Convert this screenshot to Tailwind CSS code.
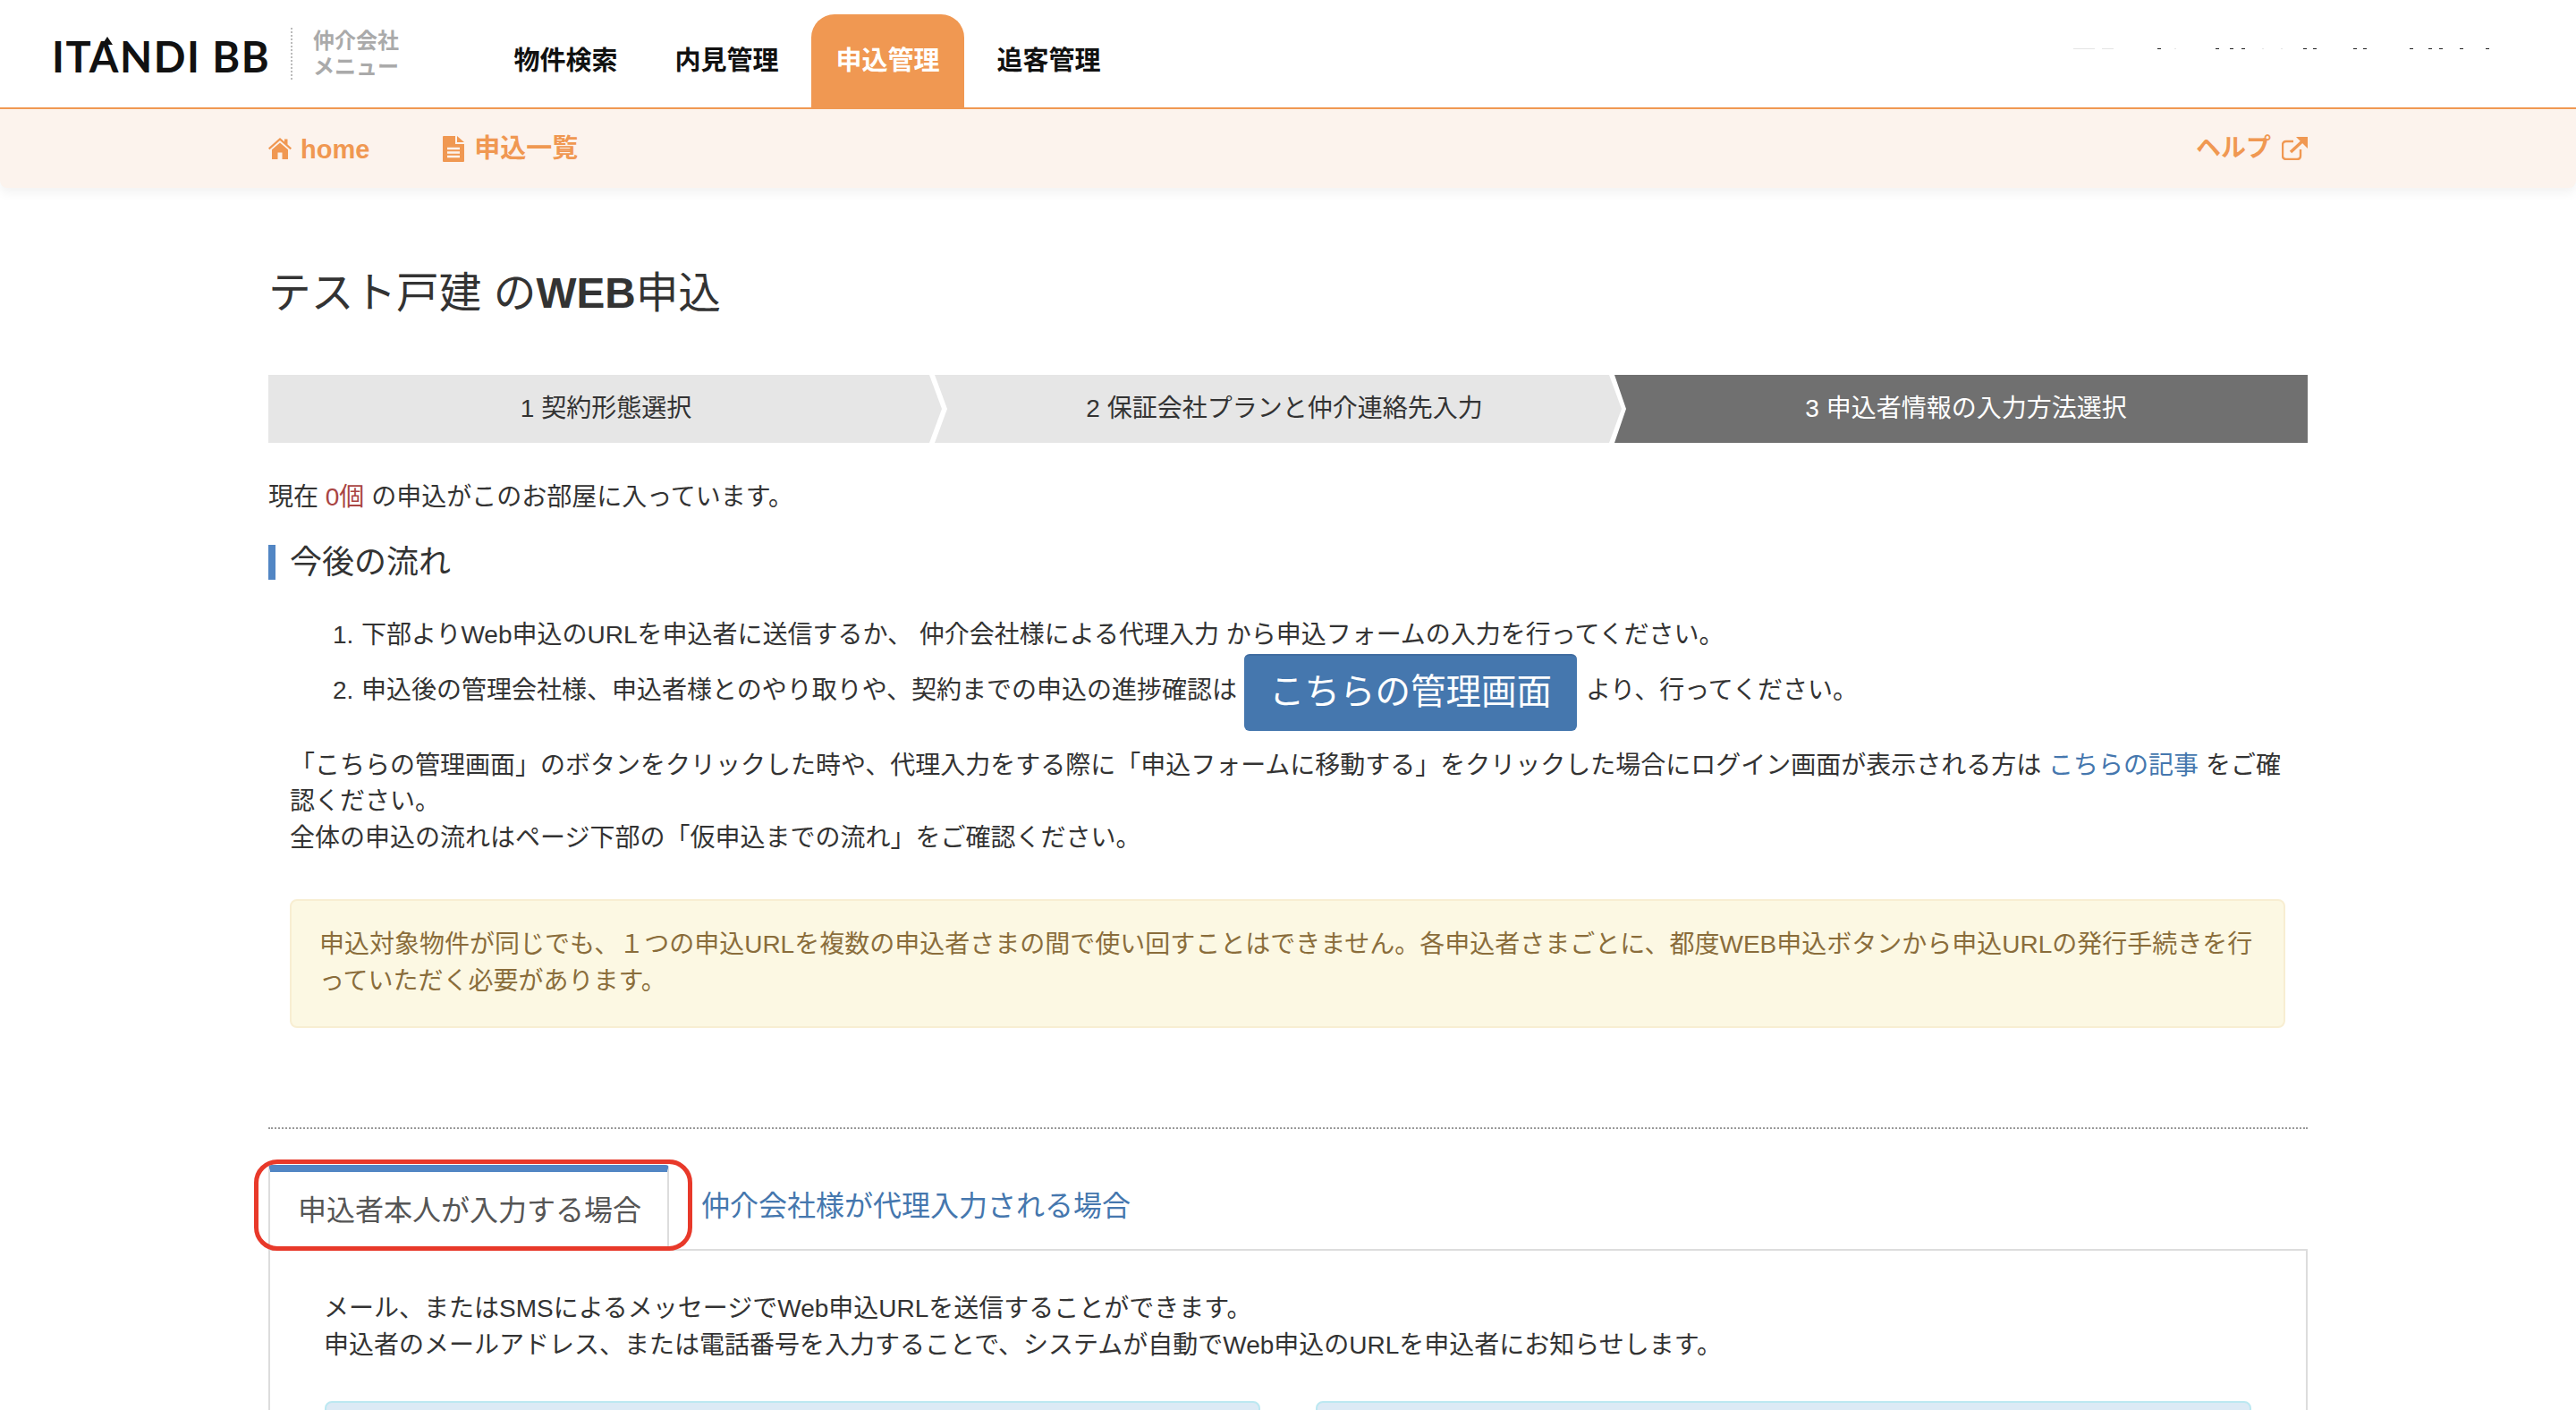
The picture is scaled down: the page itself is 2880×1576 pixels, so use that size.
<!DOCTYPE html>
<html lang="ja">
<head>
<meta charset="UTF-8">
<title>テスト戸建 のWEB申込</title>
<script src="https://cdn.jsdelivr.net/npm/@tailwindcss/browser@4"></script>
</head>
<body class="bg-white text-[#333] text-[28px] leading-[40.5px] font-['Liberation_Sans','Noto_Sans_CJK_JP',sans-serif]">
<div class="h-[1576px] overflow-hidden">

  <!-- header -->
  <header class="relative h-[122px] border-b-2 border-[#f09852] flex">
    <div class="relative w-[325px] pl-[58px] pt-[35px] shrink-0">
      <span class="font-['Lato',sans-serif] text-[47px] leading-[56px] font-bold text-[#111] tracking-[1.5px] whitespace-nowrap">ITANDI BB</span>
      <span class="absolute left-[114px] top-[41px] w-[12px] h-[9px] bg-[#111] [clip-path:polygon(50%_0,100%_100%,0_100%)]"></span>
    </div>
    <div class="mt-[31px] h-[58px] border-l-2 border-dotted border-[#bbb] pl-[23px] text-[24px] leading-[29px] font-bold text-[#aaa] whitespace-nowrap">
      <div>仲介会社</div>
      <div>メニュー</div>
    </div>
    <nav class="ml-[101px] mt-[16px] flex gap-[9px] text-[29px] font-bold text-[#111]">
      <a class="h-[104px] px-[27.5px] pt-[32px] whitespace-nowrap">物件検索</a>
      <a class="h-[104px] px-[27.5px] pt-[32px] whitespace-nowrap">内見管理</a>
      <a class="h-[104px] px-[27.5px] pt-[32px] whitespace-nowrap bg-[#f09852] text-white rounded-t-[26px]">申込管理</a>
      <a class="h-[104px] px-[27.5px] pt-[32px] whitespace-nowrap">追客管理</a>
    </nav>
    <!-- cropped remains of the text row at the top right -->
    <svg class="absolute left-[2300px] top-[53px] w-[500px] h-[3px]" viewBox="0 0 500 3">
      <path fill="#e4e4e4" d="M18 1h24v1h-24z M50 1h13v1h-13z M131 1h2v1h-2z M229 1h2v1h-2z M250 1h2v1h-2z"/>
      <path fill="#222" d="M112 1h4v1h-4z M177 1h4v1h-4z M193 1h4v1h-4z M206 1h4v1h-4z M275 1h4v1h-4z M286 1h4v1h-4z M331 1h4v1h-4z M342 1h4v1h-4z M394 1h4v1h-4z M415 1h4v1h-4z M427 1h4v1h-4z M450 1h4v1h-4z M479 1h4v1h-4z"/>
    </svg>
  </header>

  <!-- sub navigation -->
  <div class="h-[88px] bg-[#fcf3ed] rounded-b-[8px] shadow-[0_6px_12px_rgba(0,0,0,0.05)] px-[300px] flex items-center text-[29px] font-bold text-[#f09852]">
    <svg class="w-[26px] h-[24px] mr-[10px]" viewBox="0 0 26 24" fill="#f09852"><path d="M13 0 L18 4.5 V1.5 H21.5 V7.6 L26 11.6 L24.6 13.2 L13 3 L1.4 13.2 L0 11.6 Z M13 5.4 L22 13.2 V24 H15.5 V16.5 H10.5 V24 H4 V13.2 Z"/></svg>
    <a class="mt-[2px]">home</a>
    <svg class="ml-[82px] mr-[11px] w-[24px] h-[29px]" viewBox="0 0 24 29"><path fill="#f09852" d="M0 1 Q0 0 1 0 H14 V9 H24 V28 Q24 29 23 29 H1 Q0 29 0 28 Z M16 0 L24 7 H16 Z"/><path stroke="#fcf3ed" stroke-width="2.4" d="M5 14 H19 M5 18.5 H19 M5 23 H19"/></svg>
    <a>申込一覧</a>
    <a class="ml-auto text-[28px] whitespace-nowrap">ヘルプ</a>
    <svg class="ml-[12px] w-[29px] h-[26px]" viewBox="0 0 29 26" fill="none" stroke="#f09852"><path stroke-width="2.4" d="M21 14 V21 Q21 25 17 25 H5 Q1 25 1 21 V9 Q1 5 5 5 H13"/><path stroke-width="3.4" d="M10 17 L24 4"/><path fill="#f09852" stroke="none" d="M16 0 H29 V13 Z"/></svg>
  </div>

  <main class="px-[300px]">
    <h1 class="mt-[92px] text-[47.7px] leading-[52px] font-normal whitespace-nowrap">テスト戸建 の<span class="font-bold">WEB</span>申込</h1>

    <!-- steps -->
    <div class="mt-[65px] flex h-[76px]">
      <div class="w-[753px] shrink-0 pl-[2px] pt-[1px] bg-[#e6e6e6] [clip-path:polygon(0_0,739px_0,753px_38px,739px_76px,0_76px)] flex items-center justify-center"><span>1 契約形態選択</span></div>
      <div class="w-[768px] shrink-0 -ml-[8px] pl-[14px] pt-[1px] bg-[#e6e6e6] [clip-path:polygon(0_0,754px_0,768px_38px,754px_76px,0_76px,14px_38px)] flex items-center justify-center"><span>2 保証会社プランと仲介連絡先入力</span></div>
      <div class="flex-1 -ml-[8px] pl-[11px] pt-[1px] bg-[#707070] text-white [clip-path:polygon(0_0,100%_0,100%_100%,0_100%,13px_38px)] flex items-center justify-center"><span>3 申込者情報の入力方法選択</span></div>
    </div>

    <p class="mt-[41px]">現在 <span class="text-[#a94442]">0個</span> の申込がこのお部屋に入っています。</p>

    <h2 class="mt-[32px] h-[39px] border-l-[8px] border-[#5286c4] pl-[16px] text-[36px] leading-[39px] font-normal">今後の流れ</h2>

    <ol class="mt-[42px] pl-[72px]">
      <li class="h-[40px] flex"><span class="w-[32px] shrink-0">1.</span><span>下部よりWeb申込のURLを申込者に送信するか、 仲介会社様による代理入力 から申込フォームの入力を行ってください。</span></li>
      <li class="mt-[1px] h-[86px] flex items-center"><span class="w-[32px] shrink-0 mb-[2px]">2.</span><span class="mb-[2px]">申込後の管理会社様、申込者様とのやり取りや、契約までの申込の進捗確認は</span><a class="ml-[8px] mr-[10px] w-[372px] h-[86px] pb-[2px] shrink-0 bg-[#4577ae] border-t-2 border-[#3f6ca0] rounded-[6px] text-white text-[39.5px] flex items-center justify-center">こちらの管理画面</a><span class="mb-[2px]">より、行ってください。</span></li>
    </ol>

    <div class="mt-[19px] pl-[24px] pr-[25px]">
      <p class="whitespace-nowrap">「こちらの管理画面」のボタンをクリックした時や、代理入力をする際に「申込フォームに移動する」をクリックした場合にログイン画面が表示される方は <a class="text-[#4577ae]">こちらの記事</a> をご確<br>認ください。<br>全体の申込の流れはページ下部の「仮申込までの流れ」をご確認ください。</p>

      <div class="mt-[48px] h-[144px] bg-[#fcf8e3] border-2 border-[#f8eed2] rounded-[8px] px-[31px] pt-[29px] text-[#8a6d3b]">
        申込対象物件が同じでも、１つの申込URLを複数の申込者さまの間で使い回すことはできません。各申込者さまごとに、都度WEB申込ボタンから申込URLの発行手続きを行っていただく必要があります。
      </div>
    </div>

    <hr class="mt-[111px] border-0 border-t-2 border-dotted border-[#999]">

    <!-- tabs -->
    <div class="mt-[40px] flex h-[94px]">
      <div class="relative w-[448px] shrink-0 border-x-2 border-t-[8px] border-x-[#ddd] border-t-[#5286c4] rounded-t-[4px] bg-white text-[32px] text-[#555] pt-[23px] pl-[31px] whitespace-nowrap">
        申込者本人が入力する場合
        <span class="absolute -left-[18px] -right-[28px] -top-[14px] h-[102px] border-[5px] border-[#e8392a] rounded-[26px]"></span>
      </div>
      <a class="ml-[36px] mt-[26px] text-[32px] text-[#4577ae] whitespace-nowrap">仲介会社様が代理入力される場合</a>
    </div>

    <div class="h-[300px] border-x-2 border-t-2 border-[#ddd] px-[61px] pt-[45px]">
      <p class="-ml-[1px]">メール、またはSMSによるメッセージでWeb申込URLを送信することができます。<br>申込者のメールアドレス、または電話番号を入力することで、システムが自動でWeb申込のURLを申込者にお知らせします。</p>
      <div class="mt-[42px] grid grid-cols-2 gap-[62px]">
        <div class="h-[200px] bg-[#dceaf5] border-2 border-[#bce8f1] rounded-[8px]"></div>
        <div class="h-[200px] bg-[#dceaf5] border-2 border-[#bce8f1] rounded-[8px]"></div>
      </div>
    </div>
  </main>
</div>
</body>
</html>
